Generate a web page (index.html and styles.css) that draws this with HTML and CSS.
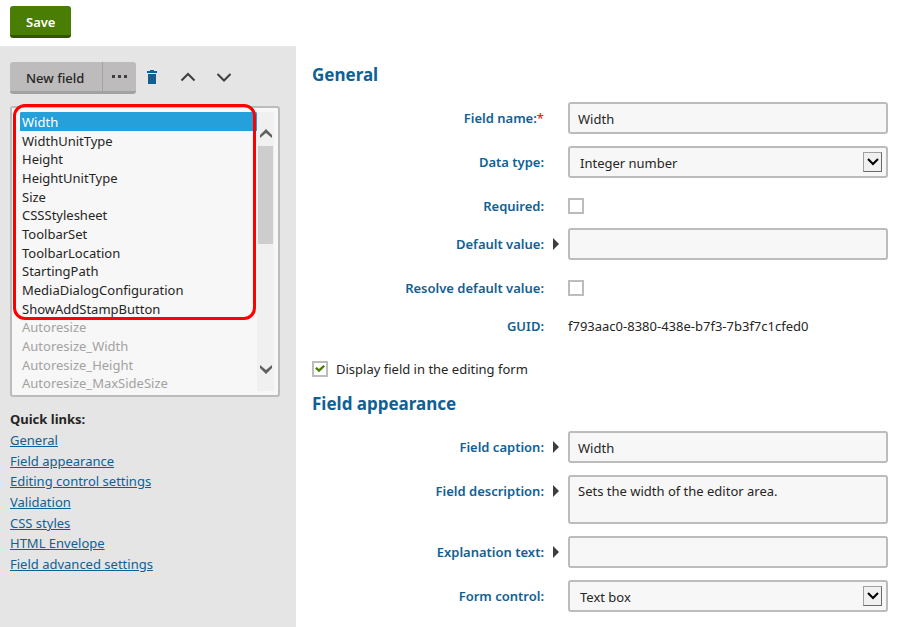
FILE: index.html
```
<!DOCTYPE html>
<html lang="en">
<head>
<meta charset="utf-8">
<title>Field editor</title>
<link rel="stylesheet" href="styles.css">
</head>
<body>
<header class="actions">
  <button class="btn btn-primary" type="button">Save</button>
</header>
<div class="layout">
  <aside class="sidebar">
    <div class="toolbar">
      <div class="btn-group">
        <button class="btn btn-default" type="button">New field</button>
        <button class="btn btn-default btn-more" type="button" aria-label="More actions">
          <svg width="15" height="4" viewBox="0 0 15 4" fill="#403e3d"><rect width="3" height="3"/><rect x="6" width="3" height="3"/><rect x="12" width="3" height="3"/></svg>
        </button>
      </div>
      <button class="icon-btn" type="button" aria-label="Delete field">
        <svg width="16" height="16" viewBox="0 0 16 16" fill="#0f6194"><path d="M3 2h3V1h4v1h3v2H3zM4 5h8v10H4z"/></svg>
      </button>
      <button class="icon-btn" type="button" aria-label="Move up">
        <svg width="16" height="16" viewBox="0 0 16 16" fill="none" stroke="#403e3d" stroke-width="2"><path d="M1.500 11.500 8 5l6.500 6.500"/></svg>
      </button>
      <button class="icon-btn" type="button" aria-label="Move down">
        <svg width="16" height="16" viewBox="0 0 16 16" fill="none" stroke="#403e3d" stroke-width="2"><path d="M1.500 5 8 11.500 14.500 5"/></svg>
      </button>
    </div>
    <div class="listbox">
      <select class="field-list" size="15" aria-label="Fields">
        <option selected>Width</option>
        <option>WidthUnitType</option>
        <option>Height</option>
        <option>HeightUnitType</option>
        <option>Size</option>
        <option>CSSStylesheet</option>
        <option>ToolbarSet</option>
        <option>ToolbarLocation</option>
        <option>StartingPath</option>
        <option>MediaDialogConfiguration</option>
        <option>ShowAddStampButton</option>
        <option class="muted">Autoresize</option>
        <option class="muted">Autoresize_Width</option>
        <option class="muted">Autoresize_Height</option>
        <option class="muted">Autoresize_MaxSideSize</option>
      </select>
      <div class="scrollbar" aria-hidden="true">
        <svg class="scroll-arrow" width="12" height="9" viewBox="0 0 12 9"><path d="M0 9V6l6-6 6 6v3L6 4z" fill="#606060"/></svg>
        <div class="scroll-track"><div class="scroll-thumb"></div></div>
        <svg class="scroll-arrow" width="12" height="9" viewBox="0 0 12 9"><path d="M0 0v3l6 6 6-6V0L6 5z" fill="#606060"/></svg>
      </div>
      <div class="highlight"></div>
    </div>
    <nav class="quick-links">
      <h2>Quick links:</h2>
      <ul>
        <li><a href="#general">General</a></li>
        <li><a href="#appearance">Field appearance</a></li>
        <li><a href="#control">Editing control settings</a></li>
        <li><a href="#validation">Validation</a></li>
        <li><a href="#css">CSS styles</a></li>
        <li><a href="#envelope">HTML Envelope</a></li>
        <li><a href="#advanced">Field advanced settings</a></li>
      </ul>
    </nav>
  </aside>
  <main class="content">
    <h1 id="general">General</h1>
    <div class="form">
      <div class="row">
        <label for="name">Field name:<span class="required">*</span></label>
        <input class="control" id="name" type="text" value="Width">
      </div>
      <div class="row">
        <label for="type">Data type:</label>
        <div class="select-wrap">
          <select class="control" id="type"><option>Integer number</option></select>
          <span class="drop"><svg width="12" height="8" viewBox="0 0 12 8"><path d="M1 1 6 6l5-5" fill="none" stroke="#000" stroke-width="2"/></svg></span>
        </div>
      </div>
      <div class="row">
        <label for="required">Required:</label>
        <input class="check" id="required" type="checkbox">
      </div>
      <div class="row">
        <label for="default">Default value:</label>
        <button class="expand" type="button" aria-label="Edit default value"></button>
        <input class="control" id="default" type="text">
      </div>
      <div class="row">
        <label for="resolve">Resolve default value:</label>
        <input class="check" id="resolve" type="checkbox">
      </div>
      <div class="row">
        <span class="label">GUID:</span>
        <span class="value">f793aac0-8380-438e-b7f3-7b3f7c1cfed0</span>
      </div>
    </div>
    <div class="display">
      <input class="check" id="display" type="checkbox" checked>
      <label for="display">Display field in the editing form</label>
    </div>
    <h1 id="appearance">Field appearance</h1>
    <div class="form">
      <div class="row">
        <label for="caption">Field caption:</label>
        <button class="expand" type="button" aria-label="Edit field caption"></button>
        <input class="control" id="caption" type="text" value="Width">
      </div>
      <div class="row">
        <label for="description">Field description:</label>
        <button class="expand" type="button" aria-label="Edit field description"></button>
        <textarea class="control" id="description">Sets the width of the editor area.</textarea>
      </div>
      <div class="row">
        <label for="explanation">Explanation text:</label>
        <button class="expand" type="button" aria-label="Edit explanation text"></button>
        <input class="control" id="explanation" type="text">
      </div>
      <div class="row">
        <label for="form-control">Form control:</label>
        <div class="select-wrap" id="control">
          <select class="control" id="form-control"><option>Text box</option></select>
          <span class="drop"><svg width="12" height="8" viewBox="0 0 12 8"><path d="M1 1 6 6l5-5" fill="none" stroke="#000" stroke-width="2"/></svg></span>
        </div>
      </div>
    </div>
  </main>
</div>
</body>
</html>
```
FILE: styles.css
```
* { box-sizing: border-box; }

body {
  margin: 0;
  min-height: 100vh;
  display: flex;
  flex-direction: column;
  background: #fff;
  color: #262524;
  font: 13px/20px "Noto Sans", "Open Sans", sans-serif;
}

button, input, select, textarea {
  margin: 0;
  font: inherit;
  color: inherit;
}

.actions { padding: 6px 10px 8px; }

.btn {
  height: 32px;
  padding: 3px 16px 0;
  border: 0;
  border-bottom: 3px solid;
  border-radius: 3px;
  font-weight: 600;
}
.btn-primary { background: #497d04; border-color: #315503; color: #fff; }
.btn-default { background: #bdbbbb; border-color: #a3a2a2; font-weight: 500; }

.btn-group { display: flex; }
.btn-group .btn:first-child { padding-right: 18px; border-radius: 3px 0 0 3px; }
.btn-group .btn-more {
  padding: 0 9px;
  border-left: 1px solid #a3a2a2;
  border-radius: 0 3px 3px 0;
}
.btn-more svg { display: block; }

.layout { flex: 1; display: flex; }

.sidebar {
  flex: none;
  width: 296px;
  padding: 16px 16px 16px 10px;
  background: #e5e5e5;
}

.toolbar { display: flex; align-items: flex-start; gap: 20px; }
.toolbar .btn-group { margin-right: -12px; }
.icon-btn {
  padding: 7px 0;
  border: 0;
  background: none;
}
.icon-btn svg { display: block; }

.listbox {
  position: relative;
  display: flex;
  margin-top: 12px;
  padding: 4px 4px 4px 8px;
  border: 2px solid #bdbbbb;
  border-radius: 3px;
  background: #f7f7f7;
}
.field-list {
  flex: 1;
  height: 279px;
  padding: 0;
  border: 0;
  outline: 0;
  overflow: hidden;
  background: none;
}
.field-list option {
  height: 19px;
  min-height: 0;
  padding: 1px 2px 0;
  line-height: 19px;
  color: #262524;
}
.field-list option:nth-child(3n+2) { height: 18px; }
.field-list option.muted { color: #a3a2a2; }
.field-list option:checked {
  background: #25a0da linear-gradient(#25a0da, #25a0da);
  color: #fff;
}

.scrollbar {
  width: 17px;
  display: flex;
  flex-direction: column;
  align-items: center;
  padding: 17px 0;
  background: #f0f0f0;
}
.scroll-track { flex: 1; width: 15px; padding: 8px 0; }
.scroll-thumb { height: 98px; background: #cdcdcd; }

.highlight {
  position: absolute;
  top: -4px;
  left: 1px;
  width: 243px;
  height: 216px;
  border: 3px solid #f00;
  border-radius: 12px;
  pointer-events: none;
}

.quick-links { margin-top: 12px; }
.quick-links h2 { margin: 0; font-size: 13px; line-height: 21px; font-weight: 700; }
.quick-links ul { margin: 0; padding: 0; list-style: none; }
.quick-links li { height: 21px; line-height: 21px; }
.quick-links li:nth-child(3n+2) { height: 20px; }
a { color: #0f6194; }

.content { flex: 1; padding: 16px 15px 12px 16px; }

h1 {
  margin: 0;
  font-size: 17px;
  line-height: 26px;
  font-weight: 700;
  color: #0f6194;
}

.form { display: grid; gap: 12px; margin-top: 14px; }

.row {
  display: grid;
  grid-template-columns: 232px 24px minmax(0, 1fr);
  align-items: start;
}
.row > * { grid-column: 3; grid-row: 1; }
.row > label, .row > .label {
  grid-column: 1;
  padding-top: 6px;
  text-align: right;
  font-weight: 600;
  color: #0f6194;
}
.required { color: #f00; font-weight: 400; }
.value { padding-top: 6px; }

.control {
  display: block;
  width: 100%;
  height: 32px;
  padding: 2px 8px 0;
  border: 2px solid #bdbbbb;
  border-radius: 3px;
  background: #f7f7f7;
  outline: 0;
}
textarea.control { height: 49px; padding-top: 4px; resize: none; }

.select-wrap { position: relative; }
select.control { appearance: none; padding-left: 10px; }
.drop {
  position: absolute;
  top: 6px;
  right: 6px;
  width: 19px;
  height: 20px;
  display: flex;
  align-items: center;
  justify-content: center;
  border: 1px solid #707070;
  border-color: #a0a0a0 #696969 #696969 #a0a0a0;
  background: #f0f0f0;
  pointer-events: none;
}

.row > .expand {
  grid-column: 2;
  justify-self: center;
  width: 6px;
  height: 12px;
  margin-top: 10px;
  padding: 0;
  border: 0;
  background: #403e3d;
  clip-path: polygon(0 0, 100% 50%, 0 100%);
}

.check {
  appearance: none;
  width: 16px;
  height: 16px;
  border: 2px solid #bdbbbb;
  background: #fff;
}
.row > .check { margin-top: 8px; }
.check:checked::before {
  content: "";
  display: block;
  height: 8px;
  margin: 2px 1px;
  background: #497d04;
  clip-path: polygon(0 45%, 18% 25%, 40% 50%, 84% 0, 100% 20%, 40% 90%);
}

.display {
  display: flex;
  align-items: center;
  gap: 8px;
  margin: 23px 0 12px;
}
```
